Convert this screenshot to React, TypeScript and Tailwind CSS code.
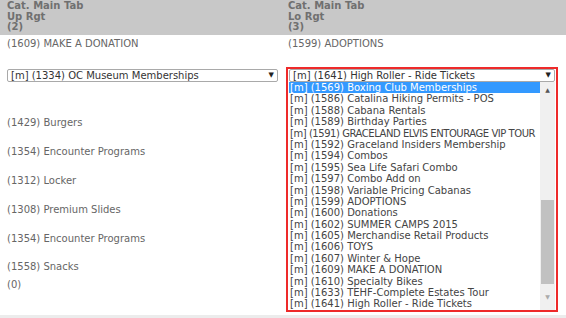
import * as React from "react";

const leftRows = [
    "(1429) Burgers",
    "(1354) Encounter Programs",
    "(1312) Locker",
    "(1308) Premium Slides",
    "(1354) Encounter Programs",
    "(1558) Snacks",
];

const options = [
    "[m] (1569) Boxing Club Memberships",
    "[m] (1586) Catalina Hiking Permits - POS",
    "[m] (1588) Cabana Rentals",
    "[m] (1589) Birthday Parties",
    "[m] (1591) GRACELAND ELVIS ENTOURAGE VIP TOUR",
    "[m] (1592) Graceland Insiders Membership",
    "[m] (1594) Combos",
    "[m] (1595) Sea Life Safari Combo",
    "[m] (1597) Combo Add on",
    "[m] (1598) Variable Pricing Cabanas",
    "[m] (1599) ADOPTIONS",
    "[m] (1600) Donations",
    "[m] (1602) SUMMER CAMPS 2015",
    "[m] (1605) Merchandise Retail Products",
    "[m] (1606) TOYS",
    "[m] (1607) Winter & Hope",
    "[m] (1609) MAKE A DONATION",
    "[m] (1610) Specialty Bikes",
    "[m] (1633) TEHF-Complete Estates Tour",
    "[m] (1641) High Roller - Ride Tickets",
];

function SelectBox({ value, className }: { value: string; className?: string }) {
    return (
        <div
            className={`flex items-center justify-between h-[13px] border border-[#a9a9a9] rounded-[2px] bg-white pl-[3px] pr-[3px] text-[#333] leading-[11px] ${className ?? ""}`}
        >
            <span className="truncate">{value}</span>
            <span className="text-[7px] text-[#222]">▼</span>
        </div>
    );
}

export default function App() {
    return (
        <div className="w-[566px] h-[318px] overflow-hidden bg-white text-[10px] text-[#666] font-['DejaVu_Sans',Verdana,sans-serif]">
            {/* Header */}
            <div className="grid grid-cols-[281px_1fr] h-[35px] bg-[#c8c8c8] font-bold text-[#707070] leading-[10.5px] pt-[1px]">
                <div className="pl-[7px]">
                    <div>Cat. Main Tab</div>
                    <div>Up Rgt</div>
                    <div>(2)</div>
                </div>
                <div className="pl-[7px]">
                    <div>Cat. Main Tab</div>
                    <div>Lo Rgt</div>
                    <div>(3)</div>
                </div>
            </div>

            {/* Body */}
            <div className="grid grid-cols-[281px_1fr] h-[280px] leading-[12px]">
                <div className="pl-[7px] pr-[3px]">
                    <div className="mt-[3px]">(1609) MAKE A DONATION</div>
                    <SelectBox value="[m] (1334) OC Museum Memberships" className="mt-[19px]" />
                    {leftRows.map((r, i) => (
                        <div key={i} className={i === 0 ? "mt-[35px]" : i === 5 ? "mt-[16px]" : "mt-[17px]"}>
                            {r}
                        </div>
                    ))}
                    <div className="mt-[6px]">(0)</div>
                </div>

                <div className="pl-[7px]">
                    <div className="mt-[3px]">(1599) ADOPTIONS</div>
                    <div className="mt-[17px] -ml-[2px] w-[272px] border-2 border-[#ee2a2a] pl-[1px] pr-[1px]">
                        <SelectBox value="[m] (1641) High Roller - Ride Tickets" className="border-[#9ab7e0]" />
                        <div className="flex h-[228px] bg-white">
                            <div className="flex-1 min-w-0 overflow-hidden text-[#444] leading-[11.4px]">
                                {options.map((o, i) => (
                                    <div
                                        key={i}
                                        className={`h-[11.4px] pl-[1px] whitespace-nowrap ${i === 0 ? "bg-[#3399ff] text-white" : ""} ${i === 4 ? "tracking-[-0.45px]" : ""}`}
                                    >
                                        {o}
                                    </div>
                                ))}
                            </div>
                            {/* Scrollbar */}
                            <div className="w-[15px] shrink-0 flex flex-col bg-[#f0f0f0]">
                                <div className="h-[15px] flex items-center justify-center text-[6px] text-[#555]">▲</div>
                                <div className="h-[103px]" />
                                <div className="h-[84px] mx-[1px] bg-[#c1c1c1]" />
                                <div className="flex-1 flex items-center justify-center text-[6px] text-[#aaa]">▼</div>
                            </div>
                        </div>
                    </div>
                </div>
            </div>

            {/* Footer band */}
            <div className="h-[3px] bg-[#ececec]" />
        </div>
    );
}
